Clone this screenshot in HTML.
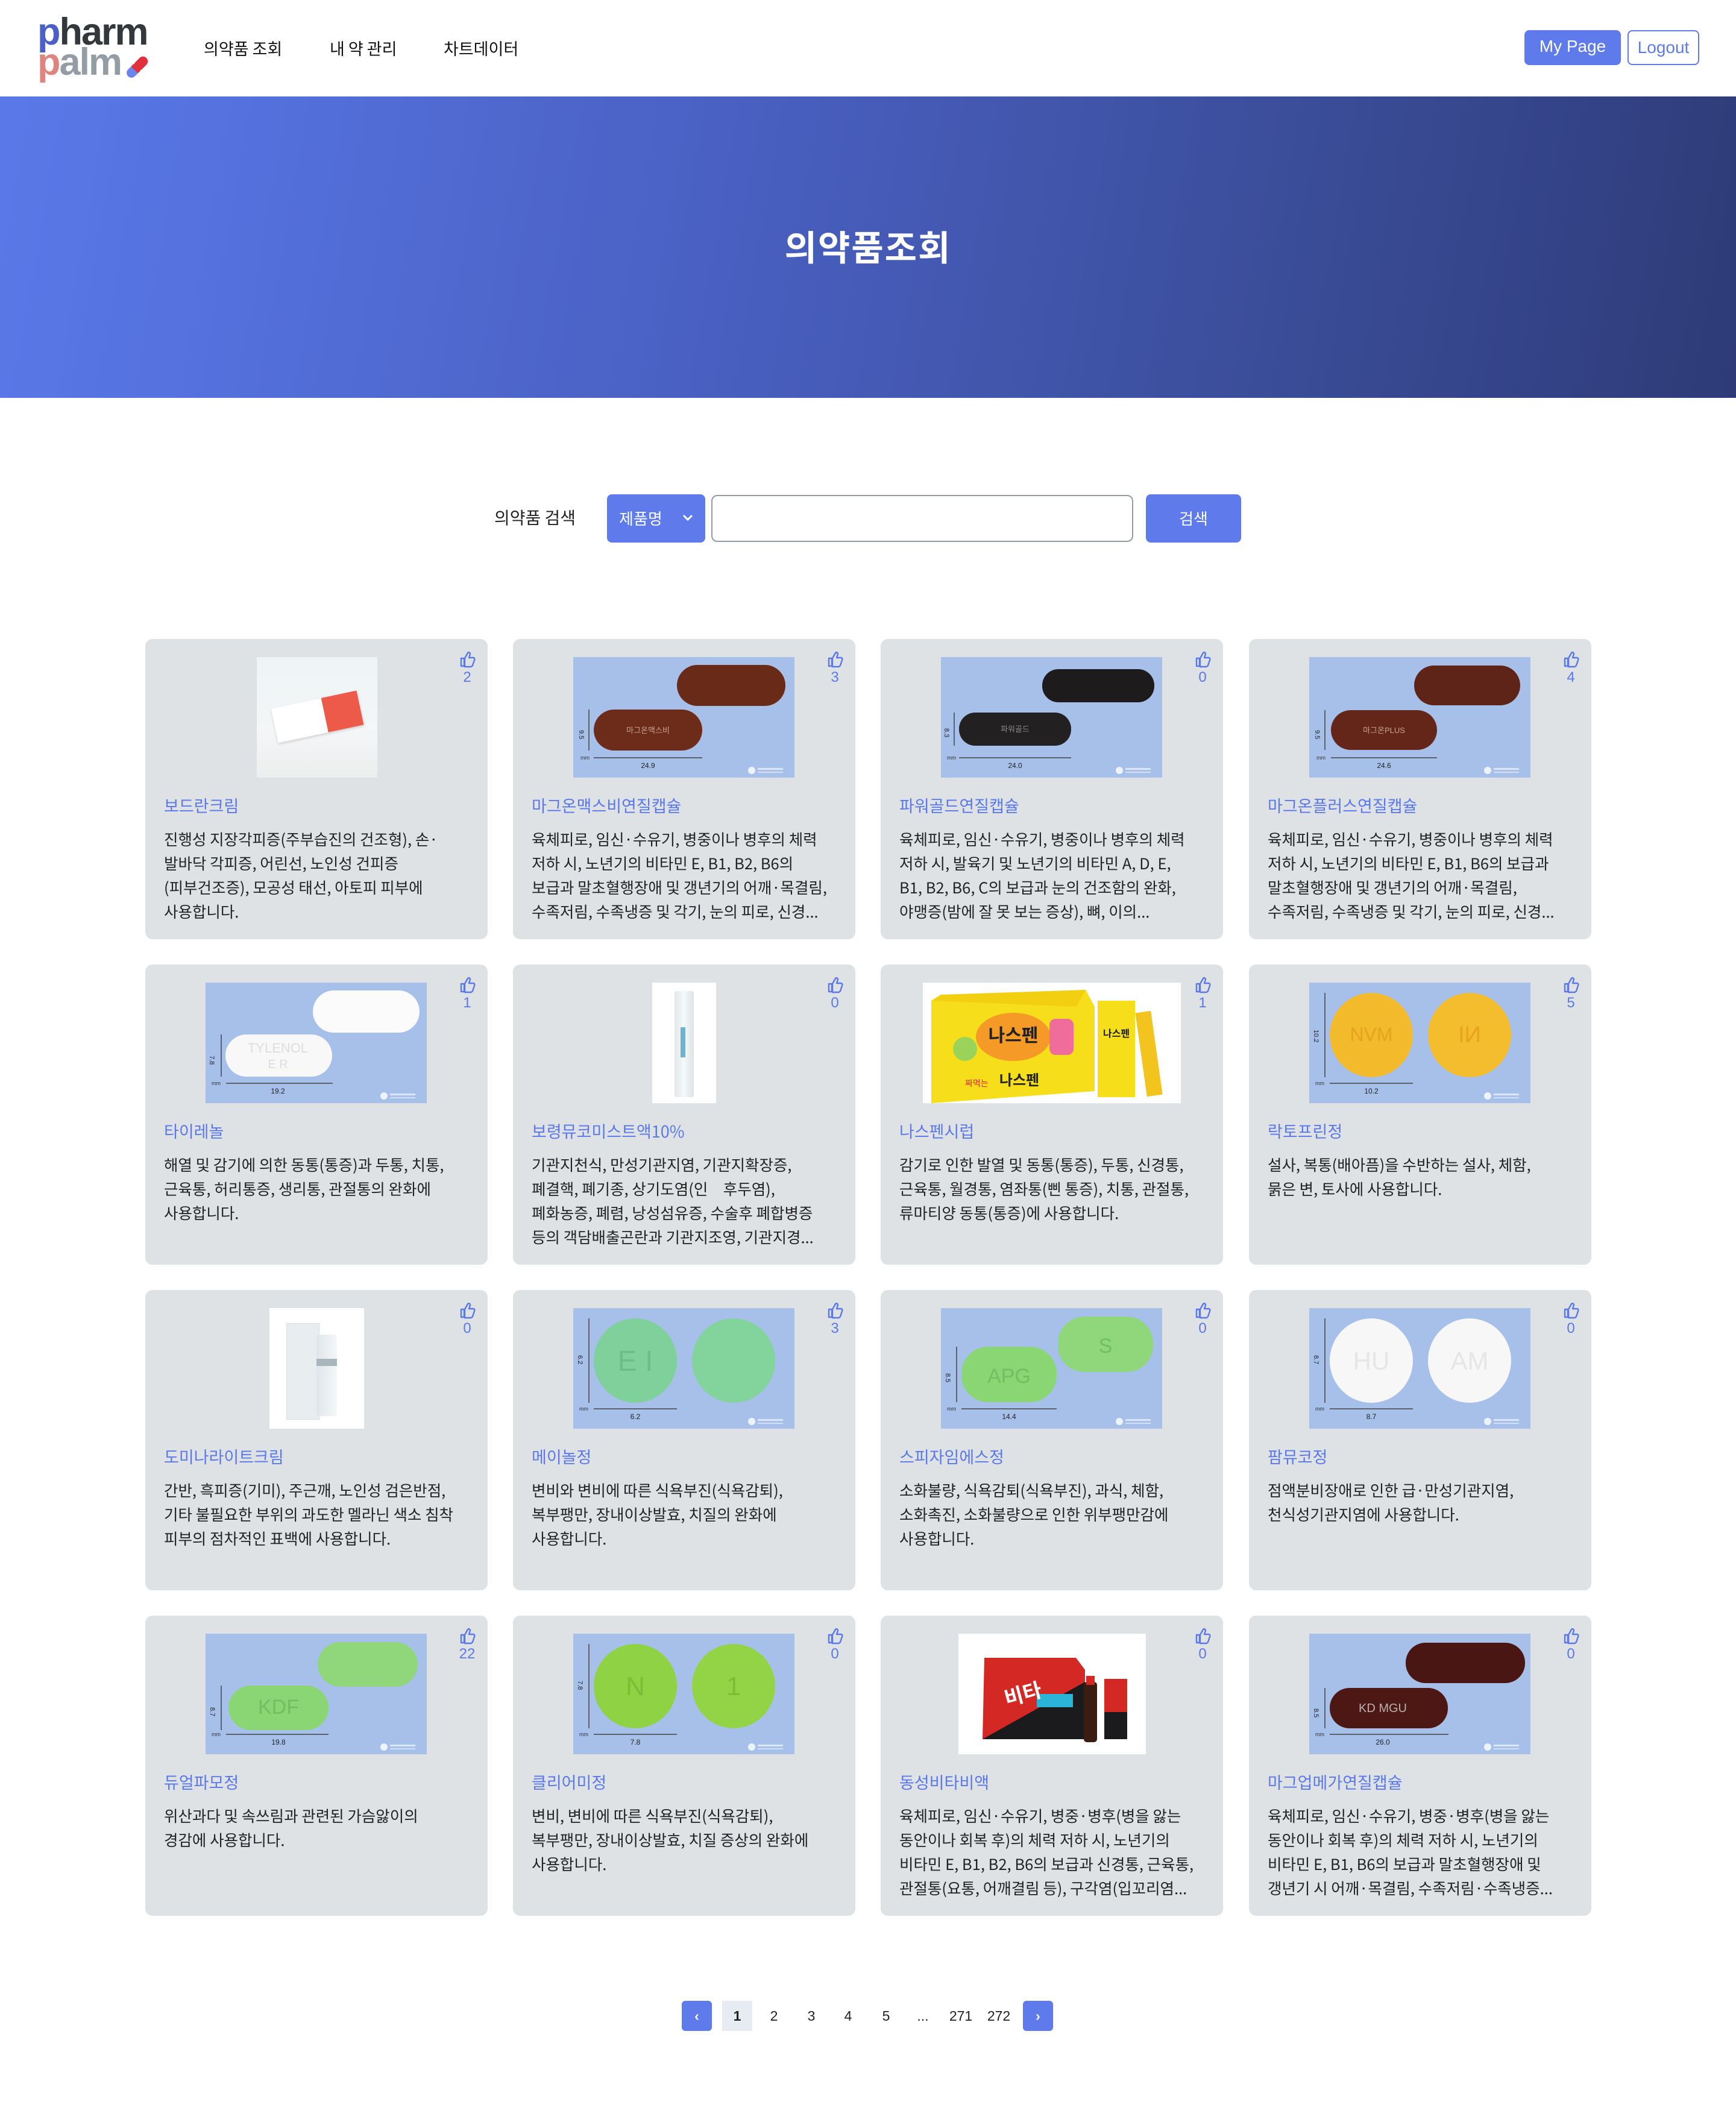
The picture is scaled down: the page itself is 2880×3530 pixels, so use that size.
<!DOCTYPE html>
<html><head><meta charset="utf-8">
<style>
*{margin:0;padding:0;box-sizing:border-box}
body{width:2880px;height:3530px;position:relative;background:#fff;font-family:"Liberation Sans","Noto Sans CJK KR",sans-serif;color:#222;overflow:hidden}
.nav{position:absolute;left:0;top:0;width:2880px;height:160px;background:#fff}
.logo{position:absolute;left:62px;top:28px;font-weight:bold;font-size:63px;line-height:50px;letter-spacing:-2px}
.nv{position:absolute;top:60px;font-size:27px;color:#111;font-family:"Noto Sans CJK KR",sans-serif}
.btn{position:absolute;top:50px;height:58px;border-radius:8px;font-size:28px;line-height:54px;text-align:center}
.hero{position:absolute;left:0;top:160px;width:2880px;height:500px;background:linear-gradient(100deg,#5a79e9 0%,#4a61c4 40%,#3a4c97 75%,#2e3b78 100%)}
.hero h1{position:absolute;left:0;width:100%;top:205px;text-align:center;color:#fff;font-size:58px;font-weight:bold;font-family:"Noto Sans CJK KR",sans-serif;letter-spacing:2px}
.card{position:absolute;width:568px;height:498px;background:#dfe2e5;border-radius:12px}
.img{position:absolute;top:30px;height:200px}
.like{position:absolute;left:520px;top:20px;width:28px;height:28px}
.cnt{position:absolute;left:514px;width:40px;top:50px;text-align:center;color:#5a78e8;font-size:24px}
.t{position:absolute;left:31px;top:256px;font-size:27px;color:#5a78e8;font-family:"Noto Sans CJK KR",sans-serif;white-space:nowrap}
.d{position:absolute;left:31px;top:312px;font-size:25.5px;line-height:40px;color:#222;font-family:"Noto Sans CJK KR",sans-serif;white-space:nowrap}
.pg{position:absolute;top:3319px;height:50px;width:50px;text-align:center;line-height:50px;font-size:23px;color:#222}
</style></head><body>
<div class="nav">
 <div class="logo"><span style="color:#4b5fc6">p</span><span style="color:#33383d">harm</span><br><span style="color:#de8580">p</span><span style="color:#949ca4">alm</span></div>
 <svg style="position:absolute;left:203px;top:88px" width="50" height="46" viewBox="0 0 50 46"><g transform="rotate(-45 25 23)"><rect x="3" y="15" width="22" height="16" rx="8" fill="#6c85ee"/><rect x="20" y="15" width="26" height="16" rx="8" fill="#e0303c"/><rect x="18" y="15" width="6" height="16" fill="#e0303c"/></g></svg>
 <div class="nv" style="left:338px">의약품 조회</div>
 <div class="nv" style="left:547px">내 약 관리</div>
 <div class="nv" style="left:736px">차트데이터</div>
 <div class="btn" style="left:2529px;width:160px;background:#5f7beb;color:#fff">My Page</div>
 <div class="btn" style="left:2700px;width:119px;border:2px solid #5f7beb;color:#5f7beb">Logout</div>
</div>
<div class="hero"><h1>의약품조회</h1></div>

<div style="position:absolute;left:820px;top:838px;font-size:28px;color:#222;font-family:'Noto Sans CJK KR',sans-serif">의약품 검색</div>
<div style="position:absolute;left:1007px;top:820px;width:163px;height:80px;background:#5f7beb;border-radius:8px;color:#fff;font-size:26px;line-height:80px;padding-left:20px;font-family:'Noto Sans CJK KR',sans-serif">제품명<svg style="position:absolute;left:124px;top:32px" width="20" height="14" viewBox="0 0 20 14"><path d="M3 3 L10 10 L17 3" stroke="#fff" stroke-width="3" fill="none"/></svg></div>
<div style="position:absolute;left:1180px;top:821px;width:700px;height:78px;border:2px solid #939ca5;border-radius:10px;background:#fff"></div>
<div style="position:absolute;left:1901px;top:820px;width:158px;height:80px;background:#5f7beb;border-radius:8px;color:#fff;font-size:26px;line-height:80px;text-align:center;font-family:'Noto Sans CJK KR',sans-serif">검색</div>

<svg width="0" height="0" style="position:absolute">
<defs>
<g id="th"><path d="M4 12 h5 v13 h-5 z M10 12 l5 -9 c2 -2 4 0 4 2 l-2 6 h7 c2 0 3 2 2 4 l-3 9 c-1 1 -2 2 -3 2 h-10 z" fill="none" stroke="#5a78e8" stroke-width="2.4" stroke-linejoin="round"/></g>
<g id="mf"><circle cx="296" cy="188" r="6" fill="#fff" opacity=".8"/><rect x="306" y="184" width="42" height="3" fill="#fff" opacity=".6"/><rect x="306" y="190" width="42" height="2" fill="#fff" opacity=".5"/></g>
</defs></svg>

<!-- Row 1 -->
<div class="card" style="left:241px;top:1060px">
 <div class="img" style="left:185px;width:200px;background:linear-gradient(180deg,#eef4f6,#f4f6f7 60%,#eceeee)"><div style="position:absolute;left:28px;top:70px;width:145px;height:58px;background:#fff;transform:rotate(-12deg);box-shadow:0 2px 4px #ccc"><div style="position:absolute;right:0;top:0;width:60px;height:58px;background:#ee5a4a"></div></div></div>
 <svg class="like" viewBox="0 0 28 28"><use href="#th"/></svg><div class="cnt">2</div>
 <div class="t">보드란크림</div>
 <div class="d">진행성 지장각피증(주부습진의 건조형), 손·<br>발바닥 각피증, 어린선, 노인성 건피증<br>(피부건조증), 모공성 태선, 아토피 피부에<br>사용합니다.</div>
</div>
<div class="card" style="left:851px;top:1060px">
 <svg class="img" style="left:100px" width="367" height="200" viewBox="0 0 367 200"><rect width="367" height="200" fill="#a6c0ea"/><rect x="172" y="13" width="180" height="68" rx="34" fill="#6a2a18"/><rect x="34" y="87" width="180" height="68" rx="34" fill="#6d2b19"/><text x="124" y="126" font-size="13" fill="#c9a393" text-anchor="middle">마그온맥스비</text><path d="M26 87v68M34 167h180" stroke="#444" stroke-width="1.5"/><text x="12" y="170" font-size="9" fill="#333">mm</text><text x="124" y="184" font-size="12" fill="#222" text-anchor="middle">24.9</text><text x="14" y="125" font-size="11" fill="#222" transform="rotate(90 14 121)">9.5</text><use href="#mf"/></svg>
 <svg class="like" viewBox="0 0 28 28"><use href="#th"/></svg><div class="cnt">3</div>
 <div class="t">마그온맥스비연질캡슐</div>
 <div class="d">육체피로, 임신·수유기, 병중이나 병후의 체력<br>저하 시, 노년기의 비타민 E, B1, B2, B6의<br>보급과 말초혈행장애 및 갱년기의 어깨·목결림,<br>수족저림, 수족냉증 및 각기, 눈의 피로, 신경...</div>
</div>
<div class="card" style="left:1461px;top:1060px">
 <svg class="img" style="left:100px" width="367" height="200" viewBox="0 0 367 200"><rect width="367" height="200" fill="#a6c0ea"/><rect x="168" y="20" width="186" height="55" rx="27" fill="#1e1b1c"/><rect x="30" y="92" width="186" height="55" rx="27" fill="#232021"/><text x="123" y="124" font-size="13" fill="#888" text-anchor="middle">파워골드</text><path d="M22 92v55M30 167h186" stroke="#444" stroke-width="1.5"/><text x="10" y="170" font-size="9" fill="#333">mm</text><text x="123" y="184" font-size="12" fill="#222" text-anchor="middle">24.0</text><text x="10" y="122" font-size="11" fill="#222" transform="rotate(90 10 118)">8.3</text><use href="#mf"/></svg>
 <svg class="like" viewBox="0 0 28 28"><use href="#th"/></svg><div class="cnt">0</div>
 <div class="t">파워골드연질캡슐</div>
 <div class="d">육체피로, 임신·수유기, 병중이나 병후의 체력<br>저하 시, 발육기 및 노년기의 비타민 A, D, E,<br>B1, B2, B6, C의 보급과 눈의 건조함의 완화,<br>야맹증(밤에 잘 못 보는 증상), 뼈, 이의...</div>
</div>
<div class="card" style="left:2072px;top:1060px">
 <svg class="img" style="left:100px" width="367" height="200" viewBox="0 0 367 200"><rect width="367" height="200" fill="#a6c0ea"/><rect x="174" y="14" width="176" height="66" rx="33" fill="#5e2418"/><rect x="36" y="88" width="176" height="66" rx="33" fill="#632618"/><text x="124" y="126" font-size="13" fill="#c9a393" text-anchor="middle">마그온PLUS</text><path d="M26 88v66M36 167h176" stroke="#444" stroke-width="1.5"/><text x="12" y="170" font-size="9" fill="#333">mm</text><text x="124" y="184" font-size="12" fill="#222" text-anchor="middle">24.6</text><text x="14" y="125" font-size="11" fill="#222" transform="rotate(90 14 121)">9.5</text><use href="#mf"/></svg>
 <svg class="like" viewBox="0 0 28 28"><use href="#th"/></svg><div class="cnt">4</div>
 <div class="t">마그온플러스연질캡슐</div>
 <div class="d">육체피로, 임신·수유기, 병중이나 병후의 체력<br>저하 시, 노년기의 비타민 E, B1, B6의 보급과<br>말초혈행장애 및 갱년기의 어깨·목결림,<br>수족저림, 수족냉증 및 각기, 눈의 피로, 신경...</div>
</div>

<!-- Row 2 -->
<div class="card" style="left:241px;top:1600px">
 <svg class="img" style="left:100px" width="367" height="200" viewBox="0 0 367 200"><rect width="367" height="200" fill="#a6c0ea"/><rect x="178" y="13" width="177" height="70" rx="35" fill="#fbfbfb"/><rect x="33" y="86" width="177" height="70" rx="35" fill="#f8f8f8"/><text x="120" y="116" font-size="22" fill="#ddd" text-anchor="middle">TYLENOL</text><text x="120" y="142" font-size="20" fill="#ddd" text-anchor="middle">E R</text><path d="M26 86v70M34 167h177" stroke="#444" stroke-width="1.5"/><text x="10" y="170" font-size="9" fill="#333">mm</text><text x="120" y="184" font-size="12" fill="#222" text-anchor="middle">19.2</text><text x="12" y="126" font-size="11" fill="#222" transform="rotate(90 12 121)">7.8</text><use href="#mf"/></svg>
 <svg class="like" viewBox="0 0 28 28"><use href="#th"/></svg><div class="cnt">1</div>
 <div class="t">타이레놀</div>
 <div class="d">해열 및 감기에 의한 동통(통증)과 두통, 치통,<br>근육통, 허리통증, 생리통, 관절통의 완화에<br>사용합니다.</div>
</div>
<div class="card" style="left:851px;top:1600px">
 <div class="img" style="left:231px;width:106px;background:#fff"><div style="position:absolute;left:37px;top:14px;width:32px;height:176px;background:linear-gradient(90deg,#e2e7ea,#f6f8f9,#dde2e6);border-radius:4px"><div style="position:absolute;left:10px;top:60px;width:8px;height:50px;background:#6fb3cf"></div></div></div>
 <svg class="like" viewBox="0 0 28 28"><use href="#th"/></svg><div class="cnt">0</div>
 <div class="t">보령뮤코미스트액10%</div>
 <div class="d">기관지천식, 만성기관지염, 기관지확장증,<br>폐결핵, 폐기종, 상기도염(인　후두염),<br>폐화농증, 폐렴, 낭성섬유증, 수술후 폐합병증<br>등의 객담배출곤란과 기관지조영, 기관지경...</div>
</div>
<div class="card" style="left:1461px;top:1600px">
 <svg class="img" style="left:70px" width="428" height="200" viewBox="0 0 428 200"><rect width="428" height="200" fill="#fff"/><path d="M14 30 L270 12 L285 40 L285 180 L14 200 Z" fill="#f6df1a"/><path d="M14 30 L30 20 L270 12 L255 40 Z" fill="#f2cf10"/><ellipse cx="150" cy="90" rx="62" ry="40" fill="#f59a27"/><text x="150" y="98" font-size="30" font-weight="bold" fill="#222" text-anchor="middle">나스펜</text><text x="160" y="170" font-size="24" font-weight="bold" fill="#222" text-anchor="middle">나스펜</text><text x="70" y="172" font-size="14" fill="#e2262a">짜먹는</text><circle cx="70" cy="110" r="20" fill="#9bd35a"/><rect x="210" y="60" width="40" height="60" rx="10" fill="#f06c9b"/><rect x="290" y="30" width="62" height="160" fill="#f6df1a"/><text x="321" y="90" font-size="16" font-weight="bold" fill="#222" text-anchor="middle">나스펜</text><rect x="362" y="48" width="26" height="140" fill="#f3c41d" transform="rotate(-8 375 118)"/></svg>
 <svg class="like" viewBox="0 0 28 28"><use href="#th"/></svg><div class="cnt">1</div>
 <div class="t">나스펜시럽</div>
 <div class="d">감기로 인한 발열 및 동통(통증), 두통, 신경통,<br>근육통, 월경통, 염좌통(삔 통증), 치통, 관절통,<br>류마티양 동통(통증)에 사용합니다.</div>
</div>
<div class="card" style="left:2072px;top:1600px">
 <svg class="img" style="left:100px" width="367" height="200" viewBox="0 0 367 200"><rect width="367" height="200" fill="#a6c0ea"/><ellipse cx="103" cy="87" rx="69" ry="70" fill="#f3bb2c"/><ellipse cx="266" cy="87" rx="69" ry="70" fill="#f4bd2e"/><text x="103" y="97" font-size="32" fill="#e5a41d" text-anchor="middle">NVM</text><text x="266" y="99" font-size="38" fill="#e5a41d" text-anchor="middle">IИ</text><path d="M26 17v140M34 167h138" stroke="#444" stroke-width="1.5"/><text x="10" y="170" font-size="9" fill="#333">mm</text><text x="103" y="184" font-size="12" fill="#222" text-anchor="middle">10.2</text><text x="12" y="82" font-size="11" fill="#222" transform="rotate(90 12 78)">10.2</text><use href="#mf"/></svg>
 <svg class="like" viewBox="0 0 28 28"><use href="#th"/></svg><div class="cnt">5</div>
 <div class="t">락토프린정</div>
 <div class="d">설사, 복통(배아픔)을 수반하는 설사, 체함,<br>묽은 변, 토사에 사용합니다.</div>
</div>

<!-- Row 3 -->
<div class="card" style="left:241px;top:2140px">
 <div class="img" style="left:206px;width:157px;background:#fff"><div style="position:absolute;left:28px;top:25px;width:55px;height:160px;background:#e8eef0;border:1px solid #d5dde0"></div><div style="position:absolute;left:78px;top:44px;width:34px;height:135px;background:linear-gradient(90deg,#dfe6e9,#f5f7f8);border-radius:4px"><div style="position:absolute;left:0;top:40px;width:34px;height:12px;background:#a8b6bd"></div></div></div>
 <svg class="like" viewBox="0 0 28 28"><use href="#th"/></svg><div class="cnt">0</div>
 <div class="t">도미나라이트크림</div>
 <div class="d">간반, 흑피증(기미), 주근깨, 노인성 검은반점,<br>기타 불필요한 부위의 과도한 멜라닌 색소 침착<br>피부의 점차적인 표백에 사용합니다.</div>
</div>
<div class="card" style="left:851px;top:2140px">
 <svg class="img" style="left:100px" width="367" height="200" viewBox="0 0 367 200"><rect width="367" height="200" fill="#a6c0ea"/><ellipse cx="103" cy="87" rx="69" ry="70" fill="#7fd09a"/><ellipse cx="266" cy="87" rx="69" ry="70" fill="#82d39c"/><text x="103" y="104" font-size="48" fill="#6ebd88" text-anchor="middle">E I</text><path d="M26 17v140M34 167h138" stroke="#444" stroke-width="1.5"/><text x="10" y="170" font-size="9" fill="#333">mm</text><text x="103" y="184" font-size="12" fill="#222" text-anchor="middle">6.2</text><text x="12" y="82" font-size="11" fill="#222" transform="rotate(90 12 78)">6.2</text><use href="#mf"/></svg>
 <svg class="like" viewBox="0 0 28 28"><use href="#th"/></svg><div class="cnt">3</div>
 <div class="t">메이놀정</div>
 <div class="d">변비와 변비에 따른 식욕부진(식욕감퇴),<br>복부팽만, 장내이상발효, 치질의 완화에<br>사용합니다.</div>
</div>
<div class="card" style="left:1461px;top:2140px">
 <svg class="img" style="left:100px" width="367" height="200" viewBox="0 0 367 200"><rect width="367" height="200" fill="#a6c0ea"/><rect x="194" y="14" width="158" height="92" rx="44" fill="#8fd77a"/><rect x="34" y="64" width="158" height="92" rx="44" fill="#8ad675"/><text x="113" y="124" font-size="34" fill="#73bd62" text-anchor="middle">APG</text><text x="273" y="74" font-size="34" fill="#73bd62" text-anchor="middle">S</text><path d="M26 64v92M34 167h158" stroke="#444" stroke-width="1.5"/><text x="10" y="170" font-size="9" fill="#333">mm</text><text x="113" y="184" font-size="12" fill="#222" text-anchor="middle">14.4</text><text x="12" y="112" font-size="11" fill="#222" transform="rotate(90 12 108)">8.5</text><use href="#mf"/></svg>
 <svg class="like" viewBox="0 0 28 28"><use href="#th"/></svg><div class="cnt">0</div>
 <div class="t">스피자임에스정</div>
 <div class="d">소화불량, 식욕감퇴(식욕부진), 과식, 체함,<br>소화촉진, 소화불량으로 인한 위부팽만감에<br>사용합니다.</div>
</div>
<div class="card" style="left:2072px;top:2140px">
 <svg class="img" style="left:100px" width="367" height="200" viewBox="0 0 367 200"><rect width="367" height="200" fill="#a6c0ea"/><ellipse cx="103" cy="87" rx="69" ry="70" fill="#f7f7f7"/><ellipse cx="266" cy="87" rx="69" ry="70" fill="#f7f7f7"/><text x="103" y="102" font-size="42" fill="#e6e6e6" text-anchor="middle">HU</text><text x="266" y="102" font-size="42" fill="#e6e6e6" text-anchor="middle">AM</text><path d="M26 17v140M34 167h138" stroke="#444" stroke-width="1.5"/><text x="10" y="170" font-size="9" fill="#333">mm</text><text x="103" y="184" font-size="12" fill="#222" text-anchor="middle">8.7</text><text x="12" y="82" font-size="11" fill="#222" transform="rotate(90 12 78)">8.7</text><use href="#mf"/></svg>
 <svg class="like" viewBox="0 0 28 28"><use href="#th"/></svg><div class="cnt">0</div>
 <div class="t">팜뮤코정</div>
 <div class="d">점액분비장애로 인한 급·만성기관지염,<br>천식성기관지염에 사용합니다.</div>
</div>

<!-- Row 4 -->
<div class="card" style="left:241px;top:2680px">
 <svg class="img" style="left:100px" width="367" height="200" viewBox="0 0 367 200"><rect width="367" height="200" fill="#a6c0ea"/><rect x="186" y="14" width="166" height="74" rx="37" fill="#8fd77a"/><rect x="38" y="86" width="166" height="74" rx="37" fill="#8ad675"/><text x="121" y="133" font-size="34" fill="#73bd62" text-anchor="middle">KDF</text><path d="M26 86v74M34 167h170" stroke="#444" stroke-width="1.5"/><text x="10" y="170" font-size="9" fill="#333">mm</text><text x="121" y="184" font-size="12" fill="#222" text-anchor="middle">19.8</text><text x="12" y="126" font-size="11" fill="#222" transform="rotate(90 12 122)">8.7</text><use href="#mf"/></svg>
 <svg class="like" viewBox="0 0 28 28"><use href="#th"/></svg><div class="cnt">22</div>
 <div class="t">듀얼파모정</div>
 <div class="d">위산과다 및 속쓰림과 관련된 가슴앓이의<br>경감에 사용합니다.</div>
</div>
<div class="card" style="left:851px;top:2680px">
 <svg class="img" style="left:100px" width="367" height="200" viewBox="0 0 367 200"><rect width="367" height="200" fill="#a6c0ea"/><ellipse cx="103" cy="87" rx="69" ry="70" fill="#8fd244"/><ellipse cx="266" cy="87" rx="69" ry="70" fill="#92d446"/><text x="103" y="102" font-size="44" fill="#7dbd36" text-anchor="middle">N</text><text x="266" y="102" font-size="44" fill="#7dbd36" text-anchor="middle">1</text><path d="M26 17v140M34 167h138" stroke="#444" stroke-width="1.5"/><text x="10" y="170" font-size="9" fill="#333">mm</text><text x="103" y="184" font-size="12" fill="#222" text-anchor="middle">7.8</text><text x="12" y="82" font-size="11" fill="#222" transform="rotate(90 12 78)">7.8</text><use href="#mf"/></svg>
 <svg class="like" viewBox="0 0 28 28"><use href="#th"/></svg><div class="cnt">0</div>
 <div class="t">클리어미정</div>
 <div class="d">변비, 변비에 따른 식욕부진(식욕감퇴),<br>복부팽만, 장내이상발효, 치질 증상의 완화에<br>사용합니다.</div>
</div>
<div class="card" style="left:1461px;top:2680px">
 <svg class="img" style="left:129px" width="311" height="200" viewBox="0 0 311 200"><rect width="311" height="200" fill="#fff"/><path d="M43 40 L195 40 L210 60 L210 175 L40 175 Z" fill="#d42824"/><path d="M40 175 L210 80 L210 175 Z" fill="#1b1b1d"/><rect x="130" y="100" width="60" height="22" fill="#2bb4d8"/><text x="80" y="120" font-size="34" font-weight="bold" fill="#fff" transform="rotate(-15 80 120)">비타</text><rect x="208" y="80" width="22" height="100" rx="5" fill="#3a1c10"/><rect x="212" y="70" width="14" height="15" fill="#d42824"/><rect x="242" y="75" width="38" height="100" fill="#d42824"/><rect x="242" y="130" width="38" height="45" fill="#1b1b1d"/></svg>
 <svg class="like" viewBox="0 0 28 28"><use href="#th"/></svg><div class="cnt">0</div>
 <div class="t">동성비타비액</div>
 <div class="d">육체피로, 임신·수유기, 병중·병후(병을 앓는<br>동안이나 회복 후)의 체력 저하 시, 노년기의<br>비타민 E, B1, B2, B6의 보급과 신경통, 근육통,<br>관절통(요통, 어깨결림 등), 구각염(입꼬리염...</div>
</div>
<div class="card" style="left:2072px;top:2680px">
 <svg class="img" style="left:100px" width="367" height="200" viewBox="0 0 367 200"><rect width="367" height="200" fill="#a6c0ea"/><rect x="160" y="15" width="198" height="67" rx="33" fill="#4a1613"/><rect x="34" y="90" width="196" height="67" rx="33" fill="#4d1714"/><text x="122" y="130" font-size="20" fill="#b9b0b0" text-anchor="middle">KD MGU</text><path d="M26 90v67M34 167h197" stroke="#444" stroke-width="1.5"/><text x="10" y="170" font-size="9" fill="#333">mm</text><text x="122" y="184" font-size="12" fill="#222" text-anchor="middle">26.0</text><text x="12" y="128" font-size="11" fill="#222" transform="rotate(90 12 124)">8.5</text><use href="#mf"/></svg>
 <svg class="like" viewBox="0 0 28 28"><use href="#th"/></svg><div class="cnt">0</div>
 <div class="t">마그업메가연질캡슐</div>
 <div class="d">육체피로, 임신·수유기, 병중·병후(병을 앓는<br>동안이나 회복 후)의 체력 저하 시, 노년기의<br>비타민 E, B1, B6의 보급과 말초혈행장애 및<br>갱년기 시 어깨·목결림, 수족저림·수족냉증...</div>
</div>

<!-- Pagination -->
<div class="pg" style="left:1131px;background:#5f7beb;border-radius:6px;color:#fff;font-weight:bold">‹</div>
<div class="pg" style="left:1198px;background:#e6ecf2;font-weight:bold">1</div>
<div class="pg" style="left:1259px">2</div>
<div class="pg" style="left:1321px">3</div>
<div class="pg" style="left:1382px">4</div>
<div class="pg" style="left:1445px">5</div>
<div class="pg" style="left:1506px">...</div>
<div class="pg" style="left:1569px">271</div>
<div class="pg" style="left:1632px">272</div>
<div class="pg" style="left:1697px;background:#5f7beb;border-radius:6px;color:#fff;font-weight:bold">›</div>
</body></html>
